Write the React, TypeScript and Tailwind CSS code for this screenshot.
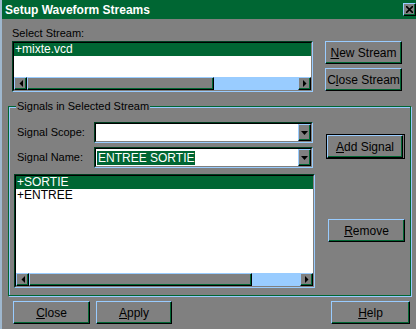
import React from "react";

const raised =
  "border border-t-[#99ccff] border-l-[#99ccff] border-r-black border-b-black shadow-[inset_-1px_-1px_0_#006633]";

function Btn({ children, className = "" }: { children: React.ReactNode; className?: string }) {
  return (
    <div className={`flex items-center justify-center h-[23px] text-[12px] text-black ${raised} ${className}`}>
      {children}
    </div>
  );
}

function Sunken({ children, className = "" }: { children: React.ReactNode; className?: string }) {
  return (
    <div className={`border border-t-[#003d1f] border-l-[#003d1f] border-r-[#99ccff] border-b-[#99ccff] ${className}`}>
      <div className="w-full h-full border border-t-black border-l-black border-r-[#808080] border-b-[#808080] bg-white flex flex-col overflow-hidden">
        {children}
      </div>
    </div>
  );
}

function Arrow({ dir }: { dir: "left" | "right" | "down" }) {
  const pts = dir === "left" ? "4,0 4,7 0.5,3.5" : dir === "right" ? "0,0 0,7 3.5,3.5" : "0,0 7,0 3.5,4";
  const w = dir === "down" ? 7 : 4;
  const h = dir === "down" ? 4 : 7;
  return (
    <svg width={w} height={h} viewBox={`0 0 ${w} ${h}`}>
      <polygon points={pts} fill="#000" />
    </svg>
  );
}

function HScroll({ thumb, track }: { thumb: number; track: number }) {
  return (
    <div className="flex h-[13px] flex-shrink-0 bg-[#99ccff]">
      <div className={`w-[13px] h-[13px] bg-[#808080] flex items-center justify-center ${raised}`}><Arrow dir="left" /></div>
      <div className={`h-[13px] bg-[#808080] ${raised}`} style={{ width: thumb }} />
      <div className="h-[13px]" style={{ width: track }} />
      <div className={`w-[13px] h-[13px] bg-[#808080] flex items-center justify-center ${raised}`}><Arrow dir="right" /></div>
    </div>
  );
}

function Combo({ value }: { value?: string }) {
  return (
    <Sunken className="w-[219px] h-[21px]">
      <div className="flex h-full">
        <div className="flex-1 flex items-center pl-[1px]">
          {value && <span className="bg-[#006633] text-white text-[12px] leading-[14px] px-[1px]">{value}</span>}
        </div>
        <div className={`w-[13px] h-full bg-[#808080] flex items-center justify-center ${raised}`}><Arrow dir="down" /></div>
      </div>
    </Sunken>
  );
}

export default function App() {
  return (
    <div className="w-[416px] h-[329px] bg-[#808080] border-l-2 border-l-[#9fb8cf] flex flex-col overflow-hidden font-['Liberation_Sans',Arial,sans-serif] text-[11px] text-black">
      <div className="h-[19px] bg-[#006633] flex items-center pl-[3px] flex-shrink-0">
        <span className="flex-1 text-white font-bold text-[12px]">Setup Waveform Streams</span>
        <div className={`w-[13px] h-[13px] bg-[#808080] flex items-center justify-center text-[12px] font-bold leading-none ${raised}`}>
          <svg width="7" height="7" viewBox="0 0 7 7"><path d="M0 0 L7 7 M7 0 L0 7" stroke="#000" strokeWidth="1.6" /></svg>
        </div>
      </div>

      <div className="flex mt-[7px]">
        <div className="ml-[10px] flex flex-col">
          <div className="h-[15px] leading-[15px]">Select Stream:</div>
          <Sunken className="w-[301px] h-[51px]">
            <div className="flex-1">
              <div className="h-[13px] leading-[13px] bg-[#006633] text-white text-[12px] pl-[1px]">+mixte.vcd</div>
            </div>
            <HScroll thumb={187} track={84} />
          </Sunken>
        </div>
        <div className="ml-[12px] mt-[15px] flex flex-col gap-[4px]">
          <Btn className="w-[77px]"><span><u>N</u>ew Stream</span></Btn>
          <Btn className="w-[77px]"><span>C<u>l</u>ose Stream</span></Btn>
        </div>
      </div>

      <div className="relative mt-[14px] ml-[6px] w-[403px] h-[190px] flex-shrink-0 border border-[#006633] shadow-[inset_1px_1px_0_#99ccff,1px_1px_0_#99ccff]">
        <div className="absolute left-[7px] top-[-8px] px-[1px] bg-[#808080] leading-[15px]">Signals in Selected Stream</div>
        <div className="flex">
          <div className="ml-[5px] mt-[15px] flex flex-col">
            <div className="flex items-center h-[21px]">
              <div className="ml-[3px] w-[77px]">Signal Scope:</div>
              <Combo />
            </div>
            <div className="flex items-center h-[21px] mt-[4px]">
              <div className="ml-[3px] w-[77px]">Signal Name:</div>
              <Combo value="ENTREE SORTIE" />
            </div>
            <Sunken className="w-[301px] h-[114px] mt-[6px]">
              <div className="flex-1 text-[12px]">
                <div className="h-[13px] leading-[13px] bg-[#006633] text-white pl-[1px]">+SORTIE</div>
                <div className="h-[13px] leading-[13px] pl-[1px]">+ENTREE</div>
              </div>
              <HScroll thumb={223} track={48} />
            </Sunken>
          </div>
          <div className="flex flex-col">
            <div className="ml-[11px] mt-[27px] border border-black">
              <Btn className="w-[76px] h-[21px]"><span><u>A</u>dd Signal</span></Btn>
            </div>
            <Btn className="ml-[13px] mt-[60px] w-[77px]"><span><u>R</u>emove</span></Btn>
          </div>
        </div>
      </div>

      <div className="flex mt-[5px]">
        <Btn className="ml-[11px] w-[77px]"><span><u>C</u>lose</span></Btn>
        <Btn className="ml-[6px] w-[76px]"><span><u>A</u>pply</span></Btn>
        <Btn className="ml-[159px] w-[79px]"><span><u>H</u>elp</span></Btn>
      </div>
    </div>
  );
}
